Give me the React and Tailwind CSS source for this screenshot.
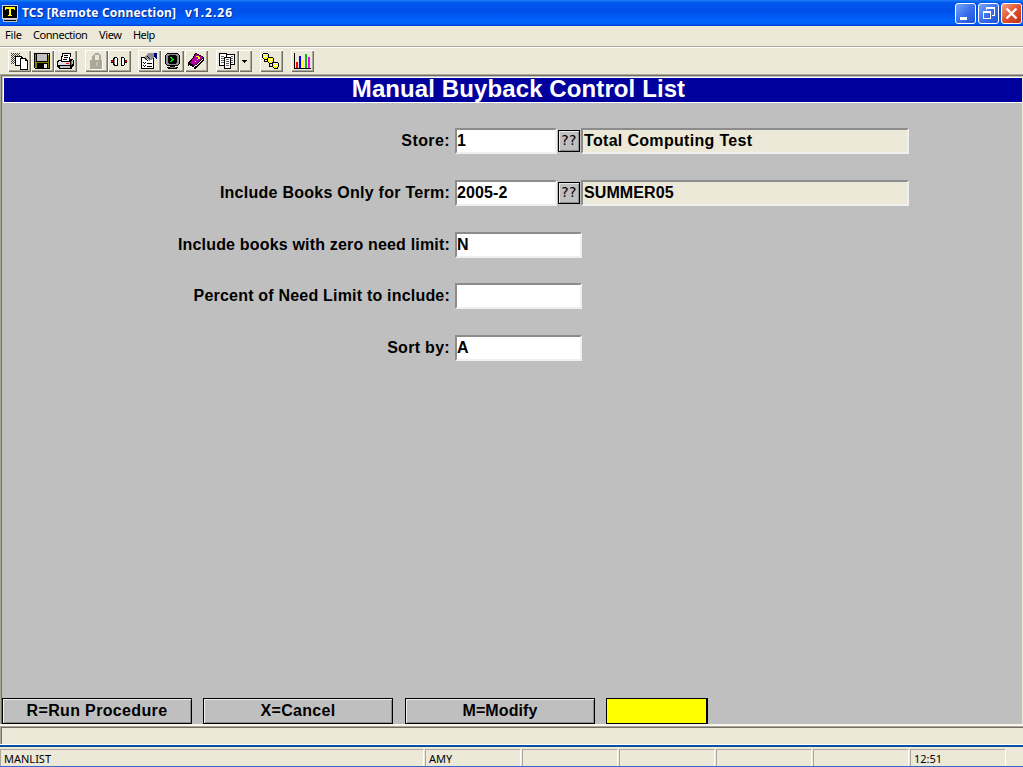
import React from "react";

const UI = "font-['Noto_Sans','Liberation_Sans',sans-serif]";

function Pic({ w = 23, h = 22, children }) {
  return (
    <svg width={w} height={h} viewBox={`0 0 ${w} ${h}`} shapeRendering="crispEdges" className="block shrink-0">
      {children}
    </svg>
  );
}

const R = ({ x, y, w, h, f = "#000" }) => <rect x={x} y={y} width={w} height={h} fill={f} />;
const P = ({ d, f = "#000" }) => <path d={d} fill={f} />;

function Tool({ children, small }) {
  return (
    <button
      className={`relative h-[22px] shrink-0 bg-[#ece9d8] shadow-[inset_1px_1px_0_#fff,inset_-1px_-1px_0_#716f64,inset_-2px_-2px_0_#aca899] ${small ? "w-[13px]" : "w-[23px]"}`}
    >
      {children}
    </button>
  );
}

function Dither({ x, y, w, h, f = "#404040" }) {
  const cells = [];
  for (let j = 0; j < h; j++)
    for (let i = 0; i < w; i++) if ((i + j) % 2 === 0) cells.push(<R key={`${i}-${j}`} x={x + i} y={y + j} w={1} h={1} f={f} />);
  return <>{cells}</>;
}

const CopyIcon = () => (
  <Pic>
    <Dither x={3} y={3} w={9} h={11} />
    <P d="M7 6h7v1h1v1h1v8H7z" />
    <P d="M8 7h5v2h2v6H8z" f="#fff" />
    <P d="M12 8h6v1h1v1h1v10h-8z" />
    <P d="M13 9h4v2h2v8h-6z" f="#fff" />
  </Pic>
);
const SaveIcon = () => (
  <Pic>
    <R x={3} y={3} w={16} h={16} />
    <R x={4} y={4} w={14} h={14} f="#808000" />
    <R x={5} y={3} w={12} h={9} />
    <R x={6} y={4} w={10} h={7} f="#c0c0c0" />
    <R x={6} y={13} w={11} h={6} />
    <R x={13} y={14} w={3} h={4} f="#ece9d8" />
    <R x={17} y={4} w={1} h={1} f="#fff" />
    <R x={3} y={18} w={1} h={1} f="#ece9d8" />
  </Pic>
);
const PrintIcon = () => (
  <Pic>
    <P d="M4 10h3V9h12v1h1v6h-1v1h-1v2H5v-1H4v-1H3v-6h1z" />
    <P d="M8 3h9v4h-1v5H7V6h1z" />
    <P d="M9 4h7v3h-1v4H8V7h1z" f="#fff" />
    <R x={10} y={5} w={4} h={1} />
    <R x={10} y={7} w={4} h={1} />
    <R x={9} y={9} w={4} h={1} />
    <R x={5} y={11} w={2} h={1} f="#fff" />
    <R x={4} y={12} w={12} h={3} f="#e0e0e0" />
    <R x={17} y={11} w={1} h={4} f="#808080" />
    <R x={18} y={10} w={1} h={4} f="#c0c0c0" />
    <R x={12} y={13} w={3} h={1} f="#f00" />
    <R x={6} y={16} w={10} h={2} f="#c0c0c0" />
  </Pic>
);
const LockIcon = () => (
  <Pic>
    <P d="M9 4h1V3h4v1h1v1h1v5h1v9H5v-9h2V6h1V5h1z" f="#aca899" />
    <R x={10} y={5} w={4} h={5} f="#ece9d8" />
    <R x={17} y={11} w={1} h={9} f="#fff" />
    <R x={6} y={19} w={12} h={1} f="#fff" />
    <R x={11} y={12} w={2} h={4} f="#c5c1b2" />
  </Pic>
);
const PlugIcon = () => (
  <Pic>
    <P d="M3 10h2V8h1V7h3v1h1v8H6v-1H5v-2H3z" />
    <P d="M19 10h-2V8h-1V7h-3v9h3v-1h1v-2h2z" />
    <R x={3} y={11} w={2} h={1} f="#f00000" />
    <R x={17} y={11} w={2} h={1} f="#f00000" />
    <R x={3} y={10} w={2} h={1} f="#800000" />
    <R x={17} y={10} w={2} h={1} f="#800000" />
    <R x={6} y={9} w={1} h={5} f="#808080" />
    <R x={7} y={8} w={2} h={7} f="#fff" />
    <R x={14} y={8} w={2} h={7} f="#fff" />
  </Pic>
);
const PropsIcon = () => (
  <Pic>
    <R x={3} y={7} w={13} h={12} />
    <R x={4} y={8} w={11} h={10} f="#fff" />
    <P d="M5 12h1v1h1v-1h1v1H7v1H6v-1H5zM5 15h1v1h1v-1h1v1H7v1H6v-1H5z" />
    <R x={9} y={13} w={5} h={1} />
    <R x={9} y={16} w={5} h={1} />
    <P d="M9 4h1V3h6v5h-1v1h-1v1h-2v1h-1v-1h-1V9H8v1H7V9H6V7h1V6h1V5h1z" f="#909090" />
    <P d="M6 7h1v1h1v1h1v1h1v1H9v-1H8V9H7V8H6zM9 6h1v1h1v1h1v1h-1V8h-1V7H9z" />
    <P d="M16 3h3v6h-1V8h-1V7h-1z" f="#000080" />
  </Pic>
);
const MonitorIcon = () => (
  <Pic>
    <P d="M5 4h1V3h11v1h1v1h1v9h-1v1h-1v1h-3v1h3v1h-1v1H7v-1H6v-1h3v-1H6v-1H5v-1H4V5h1z" />
    <P d="M6 4h11v1h1v9h-1v1H6v-1H5V5h1z" f="#909090" />
    <P d="M8 5h7v1h1v7h-1v1H8v-1H7V6h1z" />
    <P d="M9 7h2v1h1v1h1v1h-1v1h-1v1H9v-1h1v-1h1V9h-1V8H9z" f="#00e000" />
    <R x={9} y={17} w={6} h={1} f="#808080" />
  </Pic>
);
const BookIcon = () => (
  <Pic>
    <P d="M10 3h2v1h2v1h2v1h2v1h1v4h-1v1h-1v1h-1v1h-1v1h-1v1h-1v1h-1v1h-1v1H9v-1H7v-1H5v-1H3v-4h1v-1h1v-1h1V9h1V8h1V6h1V4h1z" />
    <P d="M10 4h2v1h2v1h2v1h2v1h-1v1h-1v1h-1v1h-1v1h-1v1h-1v1h-1v1h-1v1h-1v-1H8v-1H6v-1H5v-1h1v-1h1V9h1V8h1V6h1z" f="#b000a0" />
    <P d="M4 15h1v1h2v1h2v-1h1v-1h1v1h-1v1H9v1H7v-1H5v-1H4zM11 15h1v-1h1v-1h1v-1h1v-1h1v-1h1V9h1v1h-1v1h-1v1h-1v1h-1v1h-1v1h-1v1h-1z" f="#fff" />
    <P d="M11 6h3v1h1v2h-2v1h-1V9h1V7h-2zM10 11h1v1h-1z" f="#ff0" />
  </Pic>
);
const DocsIcon = () => (
  <Pic>
    <R x={3} y={3} w={8} h={13} />
    <R x={4} y={4} w={6} h={11} f="#fff" />
    <R x={10} y={4} w={9} h={11} />
    <R x={11} y={5} w={7} h={9} f="#fff" />
    <R x={8} y={7} w={7} h={12} />
    <R x={9} y={8} w={5} h={10} f="#fff" />
    {[6, 8, 10, 12].map((y) => <R key={y} x={5} y={y} w={3} h={1} f="#606060" />)}
    {[6, 8, 10, 12].map((y) => <R key={y} x={15} y={y} w={2} h={1} f="#606060" />)}
    {[9, 11, 13, 15].map((y) => <R key={y} x={10} y={y} w={3} h={1} f="#606060" />)}
  </Pic>
);
const ChainIcon = () => (
  <Pic>
    <P d="M4 8h1v3h3v1H4zM9 13h1v3h3v1H9z" />
    {[[2, 3], [7, 7], [12, 12]].map(([x, y]) => (
      <g key={x}>
        <P d={`M${x + 1} ${y}h5v1h1v4h-1v2h-4v-1h-1v-1h-1v-4h1z`} />
        <P d={`M${x + 1} ${y + 1}h5v4h-1v1h-3v-1h-1z`} f="#ff0" />
        <Dither x={x + 2} y={y + 1} w={3} h={4} f="#fff" />
      </g>
    ))}
  </Pic>
);
const ChartIcon = () => (
  <Pic>
    <R x={3} y={3} w={1} h={16} />
    <R x={3} y={18} w={17} h={1} />
    <R x={5} y={12} w={2} h={6} f="#f00" />
    <R x={8} y={6} w={2} h={12} f="#00f" />
    <R x={11} y={10} w={2} h={8} f="#ff0" />
    <R x={14} y={4} w={2} h={14} f="#00c000" />
    <R x={17} y={7} w={2} h={11} f="#f0f" />
  </Pic>
);

function WinButton({ close, children }) {
  return (
    <button
      className={`flex h-[21px] w-[21px] items-center justify-center rounded-[3px] border border-white ${close ? "bg-linear-to-br from-[#f0a080] via-[#e25030] to-[#c03010]" : "bg-linear-to-br from-[#7aa4f8] via-[#3c70ee] to-[#1c50d8]"}`}
    >
      {children}
    </button>
  );
}

const inset = "border-2 border-t-[#8c8c8c] border-l-[#8c8c8c] border-r-[#f0f0f0] border-b-[#f0f0f0]";
const formText = "font-['Liberation_Sans',sans-serif] text-[16px] font-bold whitespace-pre text-black";

function Row({ label, labelTrack, value, display, displayTrack, gap }) {
  const lookup = display !== undefined;
  return (
    <div className={`flex h-[26px] items-start ${gap}`}>
      <div className={`w-[448px] pt-[3px] text-right leading-[20px] ${formText}`}>
        <span className={labelTrack}>{label}</span>
      </div>
      <div className={`ml-[5px] h-[26px] bg-white leading-[22px] ${inset} ${formText} ${lookup ? "w-[102px]" : "w-[127px]"}`}>
        <span className="tracking-[0.1px]">{value}</span>
      </div>
      {lookup && (
        <>
          <button className="mt-[2px] ml-px h-[22px] w-[22px] border border-black bg-[#bfbfbf] pb-px font-['DejaVu_Sans',sans-serif] text-[14px] leading-[19px] tracking-[0.3px] text-black shadow-[inset_1px_1px_0_#e8e8e8,inset_-1px_-1px_0_#8c8c8c]">
            ??
          </button>
          <div className={`ml-px h-[26px] w-[328px] bg-[#ece9d8] pl-px leading-[22px] ${inset} ${formText}`}>
            <span className={displayTrack}>{display}</span>
          </div>
        </>
      )}
    </div>
  );
}

function Action({ children, track, gap }) {
  return (
    <button
      className={`h-[26px] w-[190px] border border-black bg-[#bfbfbf] text-center leading-[20px] shadow-[inset_1px_1px_0_#f0f0f0,inset_-1px_-1px_0_#8c8c8c] ${gap} ${formText}`}
    >
      <span className={track}>{children}</span>
    </button>
  );
}

function Cell({ children, wide }) {
  return (
    <div
      className={`h-[17px] shrink-0 border-t border-l border-r border-t-[#aca899] border-l-[#aca899] border-r-white pl-[3px] text-[11px] leading-[17px] ${wide ? "w-[424px]" : "w-[96px]"}`}
    >
      {children}
    </div>
  );
}

export default function App() {
  return (
    <div className={`flex h-[767px] w-[1023px] flex-col overflow-hidden bg-[#ece9d8] text-black ${UI}`}>
      <header className="flex h-[26px] shrink-0 items-center bg-[linear-gradient(#1c80f8_0%,#0058ee_10%,#0050e8_40%,#0060fa_75%,#0062ff_90%,#003dd0_100%)] pl-[2px]">
        <Pic w={17} h={17}>
          <R x={0} y={0} w={16} h={14} f="#d8d8d8" />
          <R x={1} y={1} w={14} h={12} />
          <R x={3} y={2} w={10} h={2} f="#ff0" />
          <R x={3} y={2} w={1} h={3} f="#ff0" />
          <R x={12} y={2} w={1} h={3} f="#ff0" />
          <R x={7} y={2} w={2} h={9} f="#ff0" />
          <R x={6} y={10} w={4} h={1} f="#ff0" />
          <R x={1} y={14} w={14} h={3} f="#c0c0c0" />
          <R x={2} y={15} w={12} h={1} />
        </Pic>
        <h1 className="ml-[3px] flex text-[12px] leading-[26px] font-bold whitespace-pre text-white [text-shadow:1px_1px_0_#0a2a90]">
          <span className="w-[163px] tracking-[0.18px]">TCS [Remote Connection]</span>
          <span className="tracking-[1px]">v1.2.26</span>
        </h1>
        <div className="mr-px ml-auto flex gap-[2px]">
          <WinButton>
            <Pic w={19} h={19}><R x={4} y={13} w={7} h={3} f="#fff" /></Pic>
          </WinButton>
          <WinButton>
            <Pic w={19} h={19}>
              <P d="M7 3h9v9h-3v-1h2V5H8v1H7z" f="#fff" />
              <P d="M4 7h8v8H4zM5 9v5h6V9z" f="#fff" />
            </Pic>
          </WinButton>
          <WinButton close>
            <svg width="19" height="19" viewBox="0 0 19 19"><path d="M4.5 4.5l10 10M14.5 4.5l-10 10" stroke="#fff" strokeWidth="2.4" /></svg>
          </WinButton>
        </div>
      </header>

      <nav className="flex h-[20px] shrink-0 text-[11px] leading-[18px]">
        <span className="ml-[5px] w-[28px] tracking-[-0.2px]">File</span>
        <span className="w-[66px] tracking-[-0.45px]">Connection</span>
        <span className="w-[34px] tracking-[-0.4px]">View</span>
        <span className="tracking-[-0.6px]">Help</span>
      </nav>

      <div className="flex h-[28px] shrink-0 border-t border-[#aca899] pt-[3px] pl-[8px] shadow-[inset_0_1px_0_#fff]">
        <Tool><CopyIcon /></Tool>
        <Tool><SaveIcon /></Tool>
        <Tool><PrintIcon /></Tool>
        <div className="w-[8px]" />
        <Tool><LockIcon /></Tool>
        <Tool><PlugIcon /></Tool>
        <div className="w-[7px]" />
        <Tool><PropsIcon /></Tool>
        <Tool><MonitorIcon /></Tool>
        <div className="w-px" />
        <Tool><BookIcon /></Tool>
        <div className="w-[8px]" />
        <Tool><DocsIcon /></Tool>
        <Tool small>
          <Pic w={13}><P d="M3 10h5v1H7v1H6v1H5v-1H4v-1H3z" /></Pic>
        </Tool>
        <div className="w-[8px]" />
        <Tool><ChainIcon /></Tool>
        <div className="w-[8px]" />
        <Tool><ChartIcon /></Tool>
      </div>

      <main className="flex h-[650px] shrink-0 flex-col border-t border-l border-[#aca899] bg-[#bfbfbf] shadow-[inset_1px_1px_0_#716f64,inset_-1px_0_0_#ece9d8]">
        <div className="mt-[2px] mr-px ml-[2px] h-[26px] shrink-0 border-t border-b border-l border-white bg-[#00009c] pl-[11px] text-center font-['Liberation_Sans',sans-serif] text-[24px] leading-[22px] font-bold tracking-[0.1px] text-white">
          Manual Buyback Control List
        </div>
        <form className="mt-[25px] flex flex-col pl-px" onSubmit={(e) => e.preventDefault()}>
          <Row label="Store:" labelTrack="tracking-[0.4px]" value="1" display="Total Computing Test" displayTrack="tracking-[0.32px]" gap="mb-[26px]" />
          <Row label="Include Books Only for Term:" labelTrack="tracking-[0.26px]" value="2005-2" display="SUMMER05" displayTrack="tracking-[0.1px]" gap="mb-[26px]" />
          <Row label="Include books with zero need limit:" labelTrack="tracking-[0.18px]" value="N" gap="mb-[25px]" />
          <Row label="Percent of Need Limit to include:" labelTrack="tracking-[0.2px]" value="" gap="mb-[26px]" />
          <Row label="Sort by:" labelTrack="tracking-[0.3px]" value="A" gap="" />
        </form>
        <div className="mt-auto flex pl-px">
          <Action track="tracking-[0.35px]" gap="mr-[11px]">R=Run Procedure</Action>
          <Action track="tracking-[0.3px]" gap="mr-[12px]">X=Cancel</Action>
          <Action track="tracking-[0.1px]" gap="mr-[11px]">M=Modify</Action>
          <div className="h-[26px] w-[102px] border border-r-2 border-black bg-[#ff0]" />
        </div>
      </main>

      <div className="h-[21px] shrink-0 border-t-2 border-b border-t-[#f8f6ee] border-b-white">
        <div className="h-[18px] border-t border-l border-[#aca899] shadow-[inset_1px_1px_0_#716f64]" />
      </div>
      <div className="h-[2px] shrink-0 bg-[#0a50a0]" />
      <footer className="flex h-[20px] shrink-0 gap-px border-b border-[#316ac5] pt-[2px]">
        <Cell wide>MANLIST</Cell>
        <div className="flex gap-px">
          <Cell>AMY</Cell>
          <Cell /><Cell /><Cell /><Cell />
          <Cell>12:51</Cell>
        </div>
      </footer>
    </div>
  );
}
